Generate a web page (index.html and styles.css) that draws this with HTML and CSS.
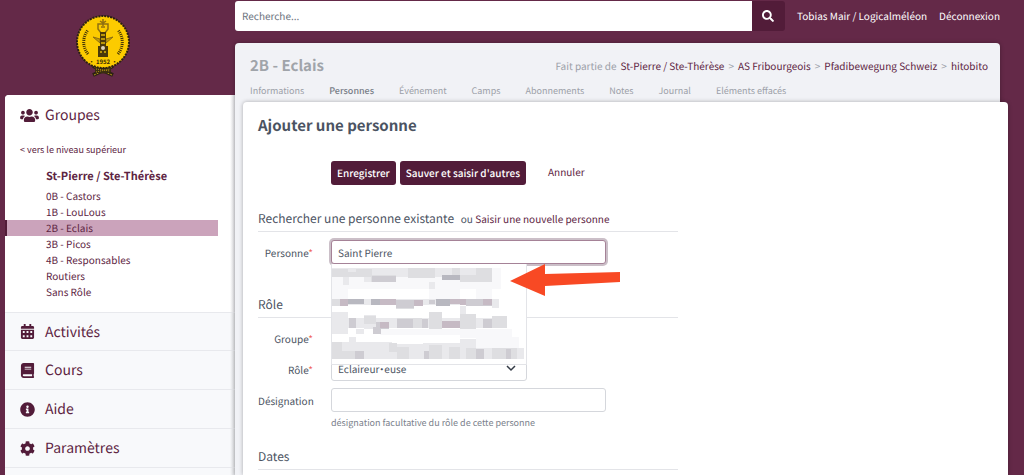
FILE: index.html
```html
<!DOCTYPE html>
<html lang="fr">
<head>
    <meta charset="UTF-8">
    <title>Ajouter une personne</title>
    <meta name="viewport" content="width=device-width, initial-scale=1.0">
    <link rel="stylesheet" href="styles.css">
</head>
<body>
<aside class="sidebar">
    <a class="logo" href="#" aria-label="hitobito">
        <svg width="54" height="64" viewBox="0 0 54 64">
            <path d="M17 60 L37 51 M37 60 L17 51" stroke="#2b2112" stroke-width="4"/>
            <path d="M18 60 L36 52 M36 60 L18 52" stroke="#b39116" stroke-width="1" stroke-dasharray="2 1"/>
            <circle cx="27" cy="27" r="26" fill="#fccb00" stroke="#2b2112" stroke-width="2" stroke-dasharray="2 1"/>
            <path d="M19 52q8 4 16 0v5q-8 3-16 0z" fill="#3a2d12"/>
            <path d="M20 54l14 2M20 57l14-3" stroke="#b39116" stroke-width="1" stroke-dasharray="1 1"/>
            <path d="M12 39 A19 19 0 0 1 12 15" fill="none" stroke="#3a2d08" stroke-width="3" stroke-dasharray="1 1"/>
            <path d="M42 39 A19 19 0 0 0 42 15" fill="none" stroke="#3a2d08" stroke-width="3" stroke-dasharray="1 1"/>
            <path d="M27 4v7M24 6l3 2 3-2M22 9h10v5l-3 4h-4l-3-4zM25 12h4" fill="none" stroke="#8f7010" stroke-width="1.5"/>
            <path d="M17 22l7 2v4zM37 22l-7 2v4z" fill="#c09a0c" stroke="#8f7010"/>
            <path d="M24 17h6v14h2v11H22V31h2z" fill="#4a390a"/>
            <path d="M25 20h4M25 24h4M25 28h4M24 37h2M28 37h2" stroke="#e0b508" stroke-width="1.5"/>
            <circle cx="27" cy="33" r="2" fill="#dcd4bd"/>
            <text x="27" y="49" text-anchor="middle" class="logo-year">· 1952 ·</text>
        </svg>
    </a>
    <nav class="menu">
        <section class="menu-groups">
            <a class="menu-title" href="#">
                <svg class="icon icon-wide" viewBox="0 0 640 512"><path d="M96 224c35.3 0 64-28.7 64-64s-28.7-64-64-64-64 28.7-64 64 28.7 64 64 64zm448 0c35.3 0 64-28.7 64-64s-28.7-64-64-64-64 28.7-64 64 28.7 64 64 64zm32 32h-64c-17.6 0-33.5 7.1-45.1 18.6 40.3 22.1 68.9 62 75.1 109.4h66c17.7 0 32-14.3 32-32v-32c0-35.3-28.7-64-64-64zm-256 0c61.9 0 112-50.1 112-112S381.9 32 320 32 208 82.1 208 144s50.1 112 112 112zm76.8 32h-8.3c-20.8 10-43.9 16-68.5 16s-47.6-6-68.5-16h-8.3C179.6 288 128 339.6 128 403.2V432c0 26.5 21.5 48 48 48h288c26.5 0 48-21.5 48-48v-28.8c0-63.6-51.6-115.2-115.2-115.2zm-223.7-13.4C161.5 263.1 145.6 256 128 256H64c-35.3 0-64 28.7-64 64v32c0 17.7 14.3 32 32 32h65.9c6.3-47.4 34.9-87.3 75.2-109.4z"/></svg>
                Groupes
            </a>
            <a class="level-up" href="#">&lt; vers le niveau supérieur</a>
            <a class="group-parent" href="#">St-Pierre / Ste-Thérèse</a>
            <ul class="group-list">
                <li><a href="#">0B - Castors</a></li>
                <li><a href="#">1B - LouLous</a></li>
                <li><a class="active" href="#">2B - Eclais</a></li>
                <li><a href="#">3B - Picos</a></li>
                <li><a href="#">4B - Responsables</a></li>
                <li><a href="#">Routiers</a></li>
                <li><a href="#">Sans Rôle</a></li>
            </ul>
        </section>
        <a class="menu-item" href="#">
            <svg class="icon" viewBox="0 0 14 16"><path fill-rule="evenodd" d="M3 0h2v2h4V0h2v2h1.500q1.500 0 1.500 1.500V5H0V3.500Q0 2 1.500 2H3zM0 6h14v8.500q0 1.500-1.500 1.500h-11Q0 16 0 14.500zM2 7.500v2h2v-2zm4 0v2h2v-2zm4 0v2h2v-2zM2 12v2h2v-2zm4 0v2h2v-2zm4 0v2h2v-2z"/></svg>
            Activités
        </a>
        <a class="menu-item" href="#">
            <svg class="icon" viewBox="0 0 448 512"><path d="M448 360V24c0-13.300-10.700-24-24-24H96C43 0 0 43 0 96v320c0 53 43 96 96 96h328c13.300 0 24-10.700 24-24v-16c0-7.500-3.500-14.300-8.900-18.700-4.200-15.400-4.200-59.300 0-74.700 5.400-4.300 8.900-11.100 8.900-18.600zM128 134c0-3.300 2.700-6 6-6h212c3.300 0 6 2.700 6 6v20c0 3.300-2.700 6-6 6H134c-3.300 0-6-2.700-6-6v-20zm0 64c0-3.300 2.700-6 6-6h212c3.300 0 6 2.700 6 6v20c0 3.300-2.700 6-6 6H134c-3.300 0-6-2.700-6-6v-20zm253.400 250H96c-17.700 0-32-14.300-32-32 0-17.600 14.400-32 32-32h285.400c-1.900 17.100-1.900 46.900 0 64z"/></svg>
            Cours
        </a>
        <a class="menu-item" href="#">
            <svg class="icon" viewBox="0 0 512 512"><path d="M256 8C119.043 8 8 119.083 8 256c0 136.997 111.043 248 248 248s248-111.003 248-248C504 119.083 392.957 8 256 8zm0 110c23.196 0 42 18.804 42 42s-18.804 42-42 42-42-18.804-42-42 18.804-42 42-42zm56 254c0 6.627-5.373 12-12 12h-88c-6.627 0-12-5.373-12-12v-24c0-6.627 5.373-12 12-12h12v-64h-12c-6.627 0-12-5.373-12-12v-24c0-6.627 5.373-12 12-12h64c6.627 0 12 5.373 12 12v100h12c6.627 0 12 5.373 12 12v24z"/></svg>
            Aide
        </a>
        <a class="menu-item" href="#">
            <svg class="icon" viewBox="0 0 512 512"><path d="M487.4 315.7l-42.6-24.6c4.3-23.2 4.3-47 0-70.2l42.6-24.6c4.9-2.8 7.1-8.6 5.5-14-11.1-35.6-30-67.8-54.7-94.6-3.8-4.1-10-5.1-14.8-2.3L380.8 110c-17.9-15.4-38.5-27.3-60.8-35.1V25.8c0-5.6-3.9-10.5-9.4-11.7-36.7-8.2-74.3-7.8-109.2 0-5.5 1.2-9.4 6.1-9.4 11.7V75c-22.2 7.9-42.8 19.8-60.8 35.1L88.7 85.5c-4.9-2.8-11-1.9-14.8 2.3-24.7 26.7-43.6 58.9-54.7 94.6-1.7 5.4.6 11.2 5.5 14L67.3 221c-4.3 23.2-4.3 47 0 70.2l-42.6 24.6c-4.9 2.8-7.1 8.6-5.5 14 11.1 35.6 30 67.8 54.7 94.6 3.8 4.1 10 5.1 14.8 2.3l42.6-24.6c17.9 15.4 38.5 27.3 60.8 35.1v49.2c0 5.6 3.9 10.5 9.4 11.7 36.7 8.2 74.3 7.8 109.2 0 5.5-1.2 9.4-6.1 9.4-11.7v-49.2c22.2-7.9 42.8-19.8 60.8-35.1l42.6 24.6c4.9 2.8 11 1.9 14.8-2.3 24.7-26.7 43.6-58.9 54.7-94.6 1.5-5.5-.7-11.3-5.6-14.1zM256 336c-44.1 0-80-35.9-80-80s35.900-80 80-80 80 35.900 80 80-35.900 80-80 80z"/></svg>
            Paramètres
        </a>
    </nav>
</aside>

<main class="main">
    <header class="topbar">
        <form class="search">
            <input type="text" placeholder="Recherche..." aria-label="Recherche">
            <button type="button" aria-label="Rechercher">
                <svg width="12" height="12" viewBox="0 0 512 512" fill="#fff"><path d="M505 442.7L405.3 343c-4.5-4.5-10.6-7-17-7H372c27.6-35.3 44-79.7 44-128C416 93.1 322.9 0 208 0S0 93.1 0 208s93.1 208 208 208c48.3 0 92.7-16.4 128-44v16.3c0 6.4 2.5 12.5 7 17l99.7 99.7c9.4 9.4 24.6 9.4 33.9 0l28.3-28.3c9.4-9.4 9.4-24.6.1-34zM208 336c-70.7 0-128-57.2-128-128 0-70.7 57.2-128 128-128 70.7 0 128 57.2 128 128 0 70.7-57.2 128-128 128z"/></svg>
            </button>
        </form>
        <a href="#">Tobias Mair / Logicalméléon</a>
        <a href="#">Déconnexion</a>
    </header>

    <div class="sheet-parent">
        <div class="sheet-head">
            <h2>2B - Eclais</h2>
            <div class="breadcrumb">
                <span>Fait partie de</span>
                <a href="#">St-Pierre / Ste-Thérèse</a>
                <span>&gt;</span>
                <a href="#">AS Fribourgeois</a>
                <span>&gt;</span>
                <a href="#">Pfadibewegung Schweiz</a>
                <span>&gt;</span>
                <a href="#">hitobito</a>
            </div>
        </div>
        <nav class="tabs">
            <a href="#">Informations</a>
            <a class="active" href="#">Personnes</a>
            <a href="#">Événement</a>
            <a href="#">Camps</a>
            <a href="#">Abonnements</a>
            <a href="#">Notes</a>
            <a href="#">Journal</a>
            <a href="#">Eléments effacés</a>
        </nav>

        <div class="sheet">
            <h1>Ajouter une personne</h1>
            <form class="person-form">
                <div class="actions">
                    <button type="button">Enregistrer</button>
                    <button type="button">Sauver et saisir d'autres</button>
                    <a href="#">Annuler</a>
                </div>

                <h3>Rechercher une personne existante <small>ou <a href="#">Saisir une nouvelle personne</a></small></h3>
                <div class="field field-person">
                    <label for="person">Personne<i>*</i></label>
                    <div class="control">
                        <input class="focused" id="person" type="text" value="Saint Pierre">
                        <div class="suggestions">
                            <svg width="194" height="99" viewBox="23 15 582 297" shape-rendering="crispEdges">
                                <path fill="#f8f8fa" d="M24 27h507v62H24zM24 89h48v30H24zM313 80h95v39h-95zM456 89h48v30h-48zM168 210h240v18H168zM408 210h156v27H408zM456 234h129v34H456z"/>
                                <path fill="#e9e9ec" d="M24 27h480v27H24zM57 54h18v23H57zM120 54h96v14h-96zM408 140h18v48h-18zM313 68h18v21h-18zM504 120h21v26h-21zM24 120h480v18H24zM24 160h48v66H24zM72 178h476v30H72zM120 167h36v43h-36zM74 234h22v27H74zM24 249h180v51H24zM204 255h100v45H204zM408 240h48v60h-48zM295 252h113v48H295zM456 268h144v32H456zM96 210h24v14H96z"/>
                                <path fill="#dedee1" d="M24 30h48v24H24zM72 40h24v14H72zM96 30h48v24H96zM250 28h82v29h-82zM382 28h26v19h-26zM456 28h48v41h-48zM141 47h75v22h-75zM408 47h48v22h-48zM24 120h24v20H24zM216 140h52v10h-52zM313 160h41v50h-41zM408 165h48v44h-48zM504 170h44v38h-44zM218 178h76v30h-76zM120 170h36v25h-36zM24 249h30v50H24zM54 276h66v24H54zM194 252h24v28h-24zM218 264h36v35h-36zM313 257h41v42h-41zM373 264h34v35h-34zM425 267h31v32h-31zM504 267h75v32h-75z"/>
                                <path fill="#ceccd2" d="M144 50h44v19h-44zM188 50h28v19h-28zM216 122h52v26h-52zM268 122h27v20h-27zM313 122h20v14h-20zM424 121h80v19h-80zM74 178h22v30H74zM218 180h49v28h-49zM294 180h18v28h-18zM354 186h53v22h-53zM476 181h28v27h-28zM156 188h38v22h-38zM146 205h24v19h-24zM92 277h28v23H92zM298 276h15v23h-15zM456 270h24v29h-24zM545 270h14v29h-14z"/>
                                <path fill="#b8b8c0" d="M354 47h53v15h-53zM72 121h48v15H72zM141 121h75v16h-75zM334 121h42v19h-42z"/>
                                <path fill="#c6bac4" d="M48 121h24v19H48zM168 121h48v16h-48zM268 123h27v19h-27zM376 121h32v15h-32zM408 121h17v18h-17zM476 121h28v17h-28zM168 188h26v18h-26zM354 186h53v20h-53z"/>
                            </svg>
                        </div>
                        <svg class="arrow" width="112" height="34" viewBox="0 0 112 34"><path fill="#f84924" d="M1 17L36 0V10L111 8V18L36 22V32Z"/></svg>
                    </div>
                </div>

                <h3>Rôle</h3>
                <div class="field">
                    <label for="group">Groupe<i>*</i></label>
                    <div class="control"><select id="group"><option></option></select></div>
                </div>
                <div class="field">
                    <label for="role">Rôle<i>*</i></label>
                    <div class="control select">
                        <select id="role"><option>Eclaireur·euse</option></select>
                        <svg class="chevron" width="10" height="7" viewBox="0 0 10 7"><path d="M1 1l4 4 4-4" fill="none" stroke="#343b46" stroke-width="1.500"/></svg>
                    </div>
                </div>
                <div class="field field-label">
                    <label for="label">Désignation</label>
                    <div class="control">
                        <input id="label" type="text" aria-describedby="label-help">
                        <p id="label-help">désignation facultative du rôle de cette personne</p>
                    </div>
                </div>

                <h3>Dates</h3>
            </form>
        </div>
    </div>
</main>
</body>
</html>
```
FILE: styles.css
```css
* {
    box-sizing: border-box;
}

body {
    display: flex;
    min-height: 100vh;
    margin: 0;
    padding-left: 5px;
    background-color: #642948;
    color: #4b5362;
    font-family: "Noto Sans CJK SC", "Noto Sans", sans-serif;
    font-size: 10px;
    line-height: 16px;
    text-rendering: geometricPrecision;
}

a {
    color: #5d2442;
    text-decoration: none;
}

h1, h2, h3, p, ul {
    margin: 0;
    padding: 0;
}

input, select, button {
    font: inherit;
    color: inherit;
    text-rendering: inherit;
}

/* sidebar */
.sidebar {
    display: flex;
    flex-direction: column;
    flex: 0 0 230px;
}

.logo {
    height: 95px;
    padding: 15px 0 0 71px;
}

.logo-year {
    font-size: 6px;
    font-weight: bold;
    fill: #3a2d08;
}

.menu {
    flex: 1;
    background: linear-gradient(to left, #d9dade, #f8f9fb 5px);
    border-top-left-radius: 4px;
}

.menu-groups {
    display: flex;
    flex-direction: column;
    height: 217px;
    background: linear-gradient(to left, #dcdce0, #fff 5px);
    border-top-left-radius: 4px;
}

.menu-title, .menu-item {
    display: flex;
    align-items: center;
    padding-left: 15px;
    font-size: 14px;
}

.menu-title {
    height: 40px;
}

.menu-item {
    height: 39px;
    border-bottom: 1px solid #e8e9ed;
}

.menu-groups + .menu-item {
    border-top: 1px solid #e8e9ed;
}

.icon {
    width: 15px;
    height: 15px;
    margin-right: 10px;
    fill: #521c39;
}

.icon-wide {
    width: 19px;
    margin-right: 6px;
}

.level-up {
    margin: 7px 0 10px 15px;
    font-size: 9px;
}

.group-parent {
    margin: 0 0 4px 41px;
    font-size: 11px;
    font-weight: bold;
}

.group-list {
    list-style: none;
    margin-right: 17px;
}

.group-list a {
    display: block;
    padding-left: 39px;
    border-left: 2px solid transparent;
}

.group-list .active {
    background-color: #cba3bb;
    border-color: #521c39;
}

/* header */
.main {
    display: flex;
    flex-direction: column;
    flex: 1;
    min-width: 0;
    padding-right: 24px;
}

.topbar {
    display: flex;
    align-items: center;
    gap: 12px;
    margin-bottom: 12px;
    padding-top: 1px;
}

.topbar > a {
    color: #fff;
}

.search {
    display: flex;
    flex: 1;
    height: 30px;
}

.search input {
    flex: 1;
    min-width: 0;
    padding: 0 7px;
    background-color: #fff;
    border: 0;
    border-radius: 3px 0 0 3px;
}

.search input::placeholder {
    color: #6c737e;
}

.search button {
    display: flex;
    align-items: center;
    justify-content: center;
    width: 33px;
    background-color: #521c39;
    border: 0;
    border-radius: 0 3px 3px 0;
}

/* sheets */
.sheet-parent {
    display: flex;
    flex-direction: column;
    flex: 1;
    background-color: #f1f2f6;
    border-radius: 4px 4px 0 0;
    box-shadow: 0 0 4px rgba(0, 0, 0, .3);
}

.sheet-head {
    display: flex;
    justify-content: space-between;
    align-items: center;
    padding: 13px 12px 0 15px;
    line-height: 20px;
}

.sheet-head h2 {
    color: #a0a4aa;
    font-size: 15px;
}

.breadcrumb {
    display: flex;
    gap: 4px;
    color: #9ca0a8;
}

.tabs {
    display: flex;
    gap: 25px;
    padding: 7px 15px 3px;
    font-size: 9px;
}

.tabs a {
    color: #9ca0a8;
}

.tabs .active {
    color: #777c86;
    font-weight: 500;
}

.sheet {
    flex: 1;
    margin: 0 -8px 0 8px;
    padding: 14px 15px 0;
    background-color: #fff;
    border-radius: 4px 4px 0 0;
    box-shadow: 0 0 4px rgba(0, 0, 0, .3);
}

.sheet h1 {
    font-size: 15px;
    line-height: 20px;
}

/* form */
.person-form {
    width: 57%;
    min-width: 420px;
}

.actions {
    display: flex;
    gap: 4px;
    margin: 25px 0 22px 73px;
}

.actions button {
    height: 24px;
    padding: 0 6px;
    background-color: #521c39;
    color: #fff;
    font-weight: 500;
    border: 0;
    border-radius: 3px;
}

.actions a {
    margin-left: 18px;
    line-height: 22px;
}

.person-form h3 {
    height: 25px;
    border-bottom: 1px solid #e3e4e8;
    font-size: 12px;
    font-weight: normal;
    line-height: 24px;
}

.person-form small {
    margin-left: 4px;
    font-size: 10px;
}

.field {
    display: grid;
    grid-template-columns: 55px 1fr;
    column-gap: 18px;
    margin-top: 5px;
}

h3 + .field {
    margin-top: 8px;
}

.field-person {
    margin-bottom: 27px;
}

.field-label {
    margin-bottom: 14px;
}

.field label {
    text-align: right;
    line-height: 26px;
    white-space: nowrap;
}

.field i {
    color: #f0685c;
    font-style: normal;
}

.control {
    position: relative;
}

.control input, .control select {
    display: block;
    width: 275px;
    height: 24px;
    padding: 0 6px;
    background-color: #fff;
    border: 1px solid #d5d7dc;
    border-radius: 3px;
    appearance: none;
}

.control select {
    width: 196px;
    font-feature-settings: "pwid", "palt";
}

.select {
    width: 196px;
}

.chevron {
    position: absolute;
    top: 8px;
    right: 11px;
}

.control .focused {
    border-color: #a58297;
    box-shadow: 0 0 0 2px #cbbfc8;
}

.control p {
    padding-top: 3px;
    color: #7b818c;
    font-size: 9px;
}

.suggestions {
    position: absolute;
    z-index: 1;
    top: 24px;
    left: 0;
    width: 196px;
    height: 101px;
    background-color: #fff;
    border: 1px solid #e3e4e8;
    border-top: 0;
}

.arrow {
    position: absolute;
    z-index: 2;
    top: 24px;
    left: 178px;
}
```
